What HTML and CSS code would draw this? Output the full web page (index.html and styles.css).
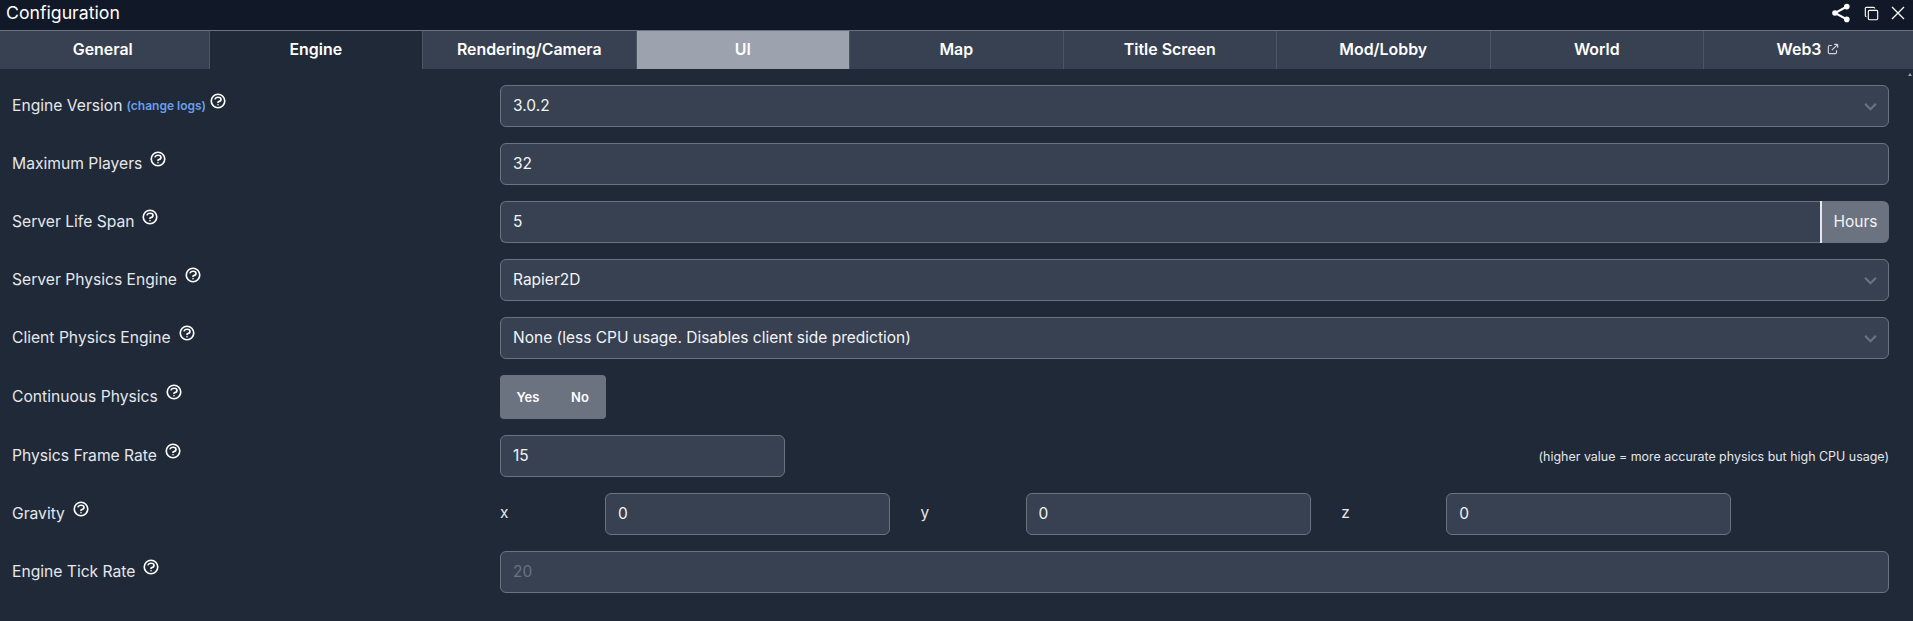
FILE: index.html
```html
<!DOCTYPE html>
<html lang="en">
<head>
    <meta charset="UTF-8">
    <meta name="viewport" content="width=device-width, initial-scale=1.0">
    <title>Configuration</title>
    <link rel="stylesheet" href="styles.css">
</head>
<body>
    <svg class="sprites">
        <symbol id="help" viewBox="0 0 24 24"><path d="M8.228 9c.549-1.165 2.03-2 3.772-2 2.21 0 4 1.343 4 3 0 1.4-1.278 2.575-3.006 2.907-.542.104-.994.54-.994 1.093m0 3h.01M21 12a9 9 0 1 1-18 0 9 9 0 0 1 18 0z"/></symbol>
        <symbol id="chevron" viewBox="0 0 12 8"><path d="M1 1.5l5 5 5-5"/></symbol>
    </svg>

    <header class="title-bar">
        <h1 class="title">Configuration</h1>
        <div class="title-icons">
            <svg class="icon-share" viewBox="0 0 20 20"><path d="M16 3.5L4 10l12 6.5" fill="none" stroke="#fff" stroke-width="2"/><circle cx="15.8" cy="3.6" r="2.8" fill="#fff"/><circle cx="4" cy="10" r="2.8" fill="#fff"/><circle cx="15.8" cy="16.4" r="2.8" fill="#fff"/></svg>
            <svg class="icon-copy" viewBox="0 0 16 16" fill="none" stroke="#fff" stroke-width="1.2"><rect x="4.6" y="4.6" width="10" height="10" rx="1.2"/><path d="M2.6 11.4A1.2 1.2 0 0 1 1.4 10.2V2.6A1.2 1.2 0 0 1 2.6 1.4h7.6a1.2 1.2 0 0 1 1.2 1.2"/></svg>
            <svg class="icon-close" viewBox="0 0 14 14" fill="none" stroke="#fff" stroke-width="1.3"><path d="M1 1l12 12M13 1L1 13"/></svg>
        </div>
    </header>

    <nav class="tabs">
        <a class="tab">General</a>
        <a class="tab tab-active">Engine</a>
        <a class="tab">Rendering/Camera</a>
        <a class="tab tab-disabled">UI</a>
        <a class="tab">Map</a>
        <a class="tab">Title Screen</a>
        <a class="tab">Mod/Lobby</a>
        <a class="tab">World</a>
        <a class="tab">Web3
            <svg class="icon-ext" viewBox="0 0 24 24" fill="none" stroke="#d1d5db" stroke-width="2"><path d="M10 6H6a2 2 0 0 0-2 2v10a2 2 0 0 0 2 2h10a2 2 0 0 0 2-2v-4M14 4h6m0 0v6m0-6L10 14"/></svg>
        </a>
    </nav>

    <span class="scroll-up"></span>

    <main class="form">
        <div class="row">
            <label class="row-label"><span>Engine Version</span> <a class="link">(change logs)</a>
                <svg class="help"><use href="#help"/></svg>
            </label>
            <div class="select-wrap">
                <select class="field"><option>3.0.2</option></select>
                <svg class="chevron"><use href="#chevron"/></svg>
            </div>
        </div>

        <div class="row">
            <label class="row-label">Maximum Players
                <svg class="help help-gap"><use href="#help"/></svg>
            </label>
            <input class="field" value="32">
        </div>

        <div class="row">
            <label class="row-label">Server Life Span
                <svg class="help help-gap"><use href="#help"/></svg>
            </label>
            <div class="input-group">
                <input class="field field-joined" value="5">
                <span class="addon">Hours</span>
            </div>
        </div>

        <div class="row">
            <label class="row-label">Server Physics Engine
                <svg class="help help-gap"><use href="#help"/></svg>
            </label>
            <div class="select-wrap">
                <select class="field"><option>Rapier2D</option></select>
                <svg class="chevron"><use href="#chevron"/></svg>
            </div>
        </div>

        <div class="row">
            <label class="row-label">Client Physics Engine
                <svg class="help help-gap"><use href="#help"/></svg>
            </label>
            <div class="select-wrap">
                <select class="field"><option>None (less CPU usage. Disables client side prediction)</option></select>
                <svg class="chevron"><use href="#chevron"/></svg>
            </div>
        </div>

        <div class="row">
            <label class="row-label">Continuous Physics
                <svg class="help help-gap"><use href="#help"/></svg>
            </label>
            <div class="toggle">
                <button class="toggle-btn">Yes</button>
                <button class="toggle-btn">No</button>
            </div>
        </div>

        <div class="row">
            <label class="row-label">Physics Frame Rate
                <svg class="help help-gap"><use href="#help"/></svg>
            </label>
            <div class="rate">
                <input class="field field-rate" value="15">
                <span class="note">(higher value = more accurate physics but high CPU usage)</span>
            </div>
        </div>

        <div class="row">
            <label class="row-label">Gravity
                <svg class="help help-gap"><use href="#help"/></svg>
            </label>
            <div class="vector">
                <div class="axis"><span class="axis-name">x</span><input class="field" value="0"></div>
                <div class="axis"><span class="axis-name">y</span><input class="field" value="0"></div>
                <div class="axis"><span class="axis-name">z</span><input class="field" value="0"></div>
            </div>
        </div>

        <div class="row">
            <label class="row-label">Engine Tick Rate
                <svg class="help help-gap"><use href="#help"/></svg>
            </label>
            <input class="field" placeholder="20" disabled>
        </div>
    </main>
</body>
</html>
```

FILE: styles.css
```css
* {
    box-sizing: border-box;
    margin: 0;
    padding: 0;
    font-family: Inter, "Noto Sans", sans-serif;
}
body {
    background: #1f2937;
    color: #e5e7eb;
    height: 100vh;
    overflow: hidden;
    position: relative;
}
.sprites {
    display: none;
}

/* title bar */
.title-bar {
    height: 31px;
    background: #111827;
    border-bottom: 1px solid #6b7280;
    display: flex;
    justify-content: space-between;
    align-items: center;
    padding: 0 8px 4px 6px;
}
.title {
    margin-top: -2px;
    font-size: 17.7px;
    font-weight: 400;
    color: #fff;
}
.title-icons {
    display: flex;
    align-items: center;
}
.icon-share {
    width: 20px;
    height: 20px;
    margin-right: 13px;
}
.icon-copy {
    width: 15px;
    height: 15px;
    margin-right: 12px;
}
.icon-close {
    width: 14px;
    height: 14px;
}

/* tabs */
.tabs {
    display: flex;
    height: 38px;
}
.tab {
    flex: 1;
    display: flex;
    align-items: center;
    justify-content: center;
    gap: 5px;
    padding-bottom: 2px;
    background: #374151;
    border-left: 1px solid #4b5563;
    color: #fff;
    font-size: 15.9px;
    font-weight: 600;
}
.tab:first-child {
    flex: 0 0 208.5px;
    padding-right: 3px;
    border-left: none;
}
.tab:last-child {
    flex: 0 0 210px;
}
.tab-active {
    background: #1f2937;
}
.tab-disabled {
    background: #9ca3af;
}
.icon-ext {
    width: 14px;
    height: 14px;
}
.scroll-up {
    position: absolute;
    top: 73px;
    right: 1px;
    border-left: 2.5px solid transparent;
    border-right: 2.5px solid transparent;
    border-bottom: 3px solid #9ca3af;
}

/* form rows */
.form {
    padding: 16px 24px 0 12px;
}
.row {
    display: flex;
    align-items: center;
    margin-bottom: 16px;
}
.row-label {
    flex: 0 0 488px;
    display: flex;
    align-items: center;
    padding-bottom: 1px;
    font-size: 15.65px;
    color: #e5e7eb;
}
.link {
    margin-left: 4px;
    color: #6b9eea;
    font-size: 12px;
    font-weight: 600;
}
.help {
    width: 18px;
    height: 18px;
    margin: 0 0 9px 3px;
    fill: none;
    stroke: #fff;
    stroke-width: 2.2;
    stroke-linecap: round;
    stroke-linejoin: round;
}
.help-gap {
    margin-left: 7px;
}

.field {
    width: 100%;
    height: 42px;
    padding: 0 12px 2px;
    background: #374151;
    border: 1px solid #6b7280;
    border-radius: 6px;
    color: #f3f4f6;
    font-size: 15.5px;
    appearance: none;
}
.field::placeholder {
    color: #6b7280;
}
.select-wrap {
    flex: 1;
    position: relative;
}
.chevron {
    position: absolute;
    right: 12px;
    top: 17px;
    width: 13px;
    height: 9px;
    fill: none;
    stroke: #6b7280;
    stroke-width: 2;
}

.input-group {
    flex: 1;
    display: flex;
}
.field-joined {
    border-radius: 6px 0 0 6px;
    border-right: none;
}
.addon {
    flex: 0 0 69px;
    display: flex;
    align-items: center;
    justify-content: center;
    padding-bottom: 2px;
    background: #6b7280;
    border-left: 2px solid #e5e7eb;
    border-radius: 0 6px 6px 0;
    color: #f3f4f6;
    font-size: 15.5px;
}

.toggle {
    display: flex;
    width: 106px;
    height: 44px;
    padding-left: 2px;
    background: #6b7280;
    border-radius: 4px;
}
.toggle-btn {
    flex: 1;
    padding-bottom: 1px;
    background: none;
    border: none;
    color: #fff;
    font-size: 13px;
    font-weight: 600;
}

.rate {
    flex: 1;
    display: flex;
    justify-content: space-between;
    align-items: center;
}
.field-rate {
    width: 285px;
}
.note {
    font-size: 12.45px;
    color: #e5e7eb;
}

.vector {
    flex: 1;
    display: flex;
    gap: 30.6px;
}
.axis {
    display: flex;
    align-items: center;
    width: 390px;
}
.axis-name {
    flex: 0 0 105px;
    font-size: 15.5px;
    padding-bottom: 3px;
}
```
